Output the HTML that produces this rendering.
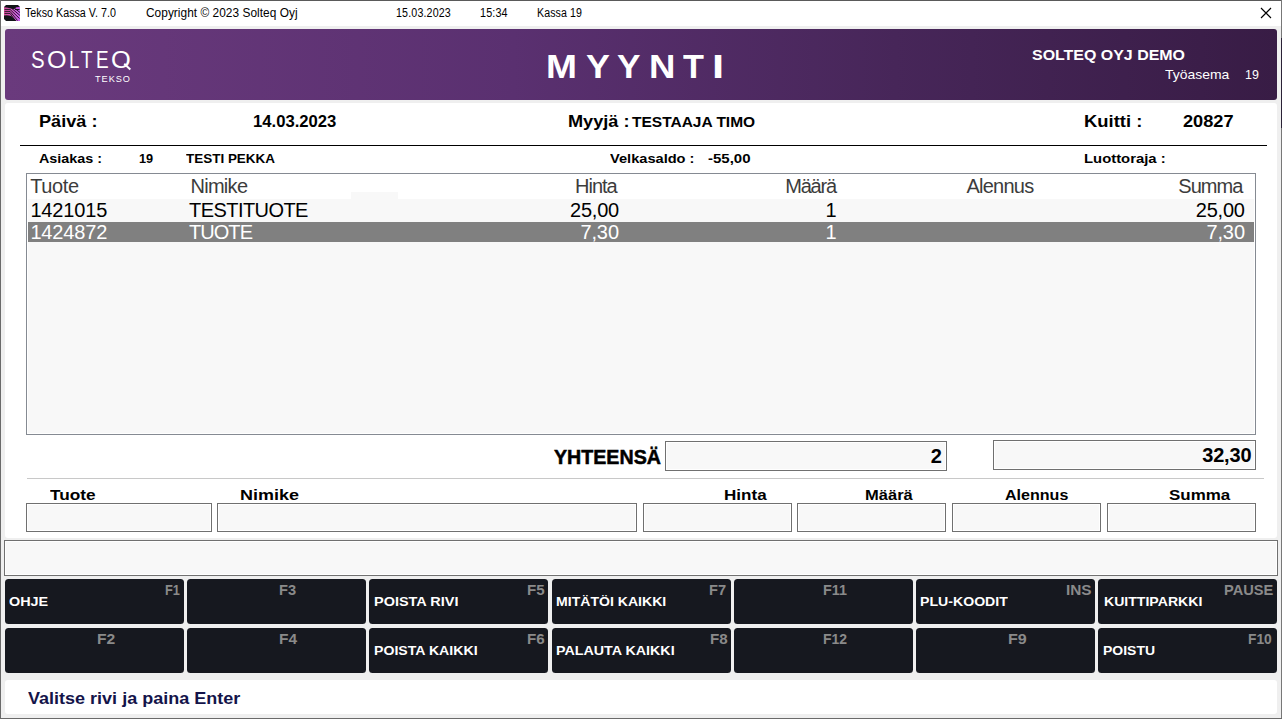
<!DOCTYPE html>
<html><head><meta charset="utf-8"><style>
html,body{margin:0;padding:0;width:1282px;height:719px;overflow:hidden;background:#efefef;}
body{position:relative;font-family:"Liberation Sans",sans-serif;}
.b{position:absolute;}
.t,.t2{position:absolute;white-space:nowrap;}
</style></head><body>
<div class="b" style="left:0px;top:0px;width:1282px;height:719px;background:#efefef;"></div>
<div class="b" style="left:0px;top:0px;width:1282px;height:26px;background:#ffffff;"></div>
<div class="b" style="left:0px;top:0px;width:1282px;height:1px;background:#5a5a5a;"></div>
<div class="b" style="left:0px;top:0px;width:1px;height:719px;background:#6a6a6a;"></div>
<div class="b" style="left:1281px;top:0px;width:1px;height:719px;background:#777;"></div>
<div class="b" style="left:1281px;top:38px;width:1px;height:90px;background:#2a2236;"></div>
<div class="b" style="left:0px;top:718px;width:1282px;height:1px;background:#6a6a6a;"></div>
<svg class="b" style="left:4px;top:5px" width="16" height="16" viewBox="0 0 16 16">
<defs><linearGradient id="pg" x1="0" y1="0" x2="1" y2="0"><stop offset="0" stop-color="#e0509e"/><stop offset="1" stop-color="#c85ff0"/></linearGradient></defs>
<path d="M2 0 H14 L16 2 V14 L14 16 H2 L0 14 V2 Z" fill="#121418"/>
<path d="M0 2.2 Q4 2.4 7 3.6 Q9 4.6 10.5 3.4 Q12.5 1.8 16 2 V16 H12.5 Q9 12.5 7 11 Q4 9.8 0 10.5 Z" fill="url(#pg)"/>
<path d="M0.5 4.4 H6 L15.5 13.5 M0.5 6.4 H6 L13.5 15.5 M0.5 8.4 H6 L11.5 16 M7.5 3.2 L16 10.5 M11 4.5 H15.5 M10 2.8 L16 7.5" stroke="#121418" stroke-width="0.9" fill="none"/>
</svg>
<div class="t" style="left:25.40px;top:7.42px;font-size:12.5px;line-height:12.5px;transform-origin:0 0;transform:scaleX(0.8585);color:#000;">Tekso Kassa V. 7.0</div>
<div class="t" style="left:146.00px;top:7.42px;font-size:12.5px;line-height:12.5px;transform-origin:0 0;transform:scaleX(0.9494);letter-spacing:0.038px;color:#000;">Copyright © 2023 Solteq Oyj</div>
<div class="t" style="left:396.40px;top:7.42px;font-size:12.5px;line-height:12.5px;transform-origin:0 0;transform:scaleX(0.8540);letter-spacing:0.178px;color:#000;">15.03.2023</div>
<div class="t" style="left:480.00px;top:7.42px;font-size:12.5px;line-height:12.5px;transform-origin:0 0;transform:scaleX(0.8647);letter-spacing:0.150px;color:#000;">15:34</div>
<div class="t" style="left:537.20px;top:7.42px;font-size:12.5px;line-height:12.5px;transform-origin:0 0;transform:scaleX(0.8510);letter-spacing:0.114px;color:#000;">Kassa 19</div>
<svg class="b" style="left:1258px;top:6px" width="16" height="16" viewBox="0 0 16 16"><path d="M3 2 L13 12 M13 2 L3 12" stroke="#000" stroke-width="1.15"/></svg>
<div class="b" style="left:5px;top:29px;width:1272px;height:71px;background:linear-gradient(90deg,#6a3a7d 0%,#5a3070 40%,#472659 70%,#381c45 100%);border-radius:3px;"></div>
<div class="t2" style="left:31.03px;top:48.96px;font-size:23.2px;line-height:23.2px;transform-origin:0 19.64px;transform:scale(0.8797,1.0000);color:#fff;">S</div>
<div class="t2" style="left:46.91px;top:48.96px;font-size:23.2px;line-height:23.2px;transform-origin:0 19.64px;transform:scale(1.0823,1.0000);color:#fff;">O</div>
<div class="t2" style="left:68.57px;top:48.96px;font-size:23.2px;line-height:23.2px;transform-origin:0 19.64px;transform:scale(0.8039,1.0000);color:#fff;">L</div>
<div class="t2" style="left:81.00px;top:48.96px;font-size:23.2px;line-height:23.2px;transform-origin:0 19.64px;transform:scale(0.8092,1.0000);color:#fff;">T</div>
<div class="t2" style="left:96.25px;top:48.96px;font-size:23.2px;line-height:23.2px;transform-origin:0 19.64px;transform:scale(0.8175,1.0000);color:#fff;">E</div>
<div class="t2" style="left:111.10px;top:48.96px;font-size:23.2px;line-height:23.2px;transform-origin:0 19.64px;transform:scale(1.0949,1.0000);color:#fff;">O</div>
<svg class="b" style="left:118px;top:58px" width="16" height="14"><path d="M7 6.5 L11.6 10.8" stroke="#fff" stroke-width="2" stroke-linecap="square"/></svg>
<div class="t" style="left:95.00px;top:75.21px;font-size:9.2px;line-height:9.2px;letter-spacing:0.950px;color:#fff;">TEKSO</div>
<div class="t2" style="left:546.46px;top:49.54px;font-size:33.5px;line-height:33.5px;transform-origin:0 28.36px;transform:scale(1.1106,1.0000);color:#fff;font-weight:bold;">M</div>
<div class="t2" style="left:585.66px;top:49.54px;font-size:33.5px;line-height:33.5px;transform-origin:0 28.36px;transform:scale(1.0708,1.0000);color:#fff;font-weight:bold;">Y</div>
<div class="t2" style="left:617.27px;top:49.54px;font-size:33.5px;line-height:33.5px;transform-origin:0 28.36px;transform:scale(1.0519,1.0000);color:#fff;font-weight:bold;">Y</div>
<div class="t2" style="left:648.80px;top:49.54px;font-size:33.5px;line-height:33.5px;transform-origin:0 28.36px;transform:scale(1.0914,1.0000);color:#fff;font-weight:bold;">N</div>
<div class="t2" style="left:683.49px;top:49.54px;font-size:33.5px;line-height:33.5px;transform-origin:0 28.36px;transform:scale(1.0203,1.0000);color:#fff;font-weight:bold;">T</div>
<div class="t2" style="left:712.23px;top:49.54px;font-size:33.5px;line-height:33.5px;transform-origin:0 28.36px;transform:scale(1.3061,1.0000);color:#fff;font-weight:bold;">I</div>
<div class="t" style="left:1032.00px;top:46.80px;font-size:15px;line-height:15px;font-weight:bold;transform-origin:0 0;transform:scaleX(1.0634);color:#fff;">SOLTEQ OYJ DEMO</div>
<div class="t" style="left:1165.00px;top:67.57px;font-size:13.5px;line-height:13.5px;transform-origin:0 0;transform:scaleX(1.0323);color:#fff;">Työasema</div>
<div class="t" style="left:1245.00px;top:67.57px;font-size:13.5px;line-height:13.5px;transform-origin:0 0;transform:scaleX(0.9231);color:#fff;">19</div>
<div class="b" style="left:5px;top:103px;width:1272px;height:435px;background:#fff;border-radius:3px;"></div>
<div class="t" style="left:39.40px;top:112.61px;font-size:17px;line-height:17px;font-weight:bold;transform-origin:0 0;transform:scaleX(1.0658);color:#000;">Päivä :</div>
<div class="t" style="left:253.40px;top:112.61px;font-size:17px;line-height:17px;font-weight:bold;transform-origin:0 0;transform:scaleX(0.9798);color:#000;">14.03.2023</div>
<div class="t" style="left:567.80px;top:112.61px;font-size:17px;line-height:17px;font-weight:bold;transform-origin:0 0;transform:scaleX(1.0675);color:#000;">Myyjä :</div>
<div class="t" style="left:632.00px;top:113.88px;font-size:15.5px;line-height:15.5px;font-weight:bold;color:#000;">TESTAAJA TIMO</div>
<div class="t" style="left:1083.60px;top:112.61px;font-size:17px;line-height:17px;font-weight:bold;transform-origin:0 0;transform:scaleX(1.0826);color:#000;">Kuitti :</div>
<div class="t" style="left:1182.60px;top:112.61px;font-size:17px;line-height:17px;font-weight:bold;transform-origin:0 0;transform:scaleX(1.0699);color:#000;">20827</div>
<div class="b" style="left:20px;top:145px;width:1247px;height:1px;background:#000;"></div>
<div class="t" style="left:39.40px;top:153.42px;font-size:12.5px;line-height:12.5px;font-weight:bold;transform-origin:0 0;transform:scaleX(1.1474);color:#000;">Asiakas :</div>
<div class="t" style="left:139.00px;top:153.42px;font-size:12.5px;line-height:12.5px;font-weight:bold;transform-origin:0 0;transform:scaleX(1.0199);color:#000;">19</div>
<div class="t" style="left:185.60px;top:153.42px;font-size:12.5px;line-height:12.5px;font-weight:bold;transform-origin:0 0;transform:scaleX(1.0770);color:#000;">TESTI PEKKA</div>
<div class="t" style="left:610.00px;top:153.42px;font-size:12.5px;line-height:12.5px;font-weight:bold;transform-origin:0 0;transform:scaleX(1.1690);color:#000;">Velkasaldo :</div>
<div class="t" style="left:708.00px;top:153.42px;font-size:12.5px;line-height:12.5px;font-weight:bold;transform-origin:0 0;transform:scaleX(1.2007);color:#000;">-55,00</div>
<div class="t" style="left:1083.60px;top:153.42px;font-size:12.5px;line-height:12.5px;font-weight:bold;transform-origin:0 0;transform:scaleX(1.1883);color:#000;">Luottoraja :</div>
<div class="b" style="left:26px;top:173px;width:1230px;height:262px;background:#fff;border:1px solid #858a92;box-sizing:border-box;"></div>
<div class="b" style="left:28px;top:199px;width:1226px;height:234px;background:#f8f8f8;"></div>
<div class="b" style="left:351px;top:192px;width:47px;height:7px;background:#f8f8f8;"></div>
<div class="b" style="left:28px;top:222px;width:1226px;height:20px;background:#808080;"></div>
<div class="t" style="left:30.20px;top:176.07px;font-size:20px;line-height:20px;letter-spacing:-0.350px;color:#3c3c3c;">Tuote</div>
<div class="t" style="left:190.40px;top:176.07px;font-size:20px;line-height:20px;letter-spacing:-0.700px;color:#3c3c3c;">Nimike</div>
<div class="t" style="left:575.00px;top:176.07px;font-size:20px;line-height:20px;letter-spacing:-1.000px;color:#3c3c3c;">Hinta</div>
<div class="t" style="left:785.20px;top:176.07px;font-size:20px;line-height:20px;letter-spacing:-1.200px;color:#3c3c3c;">Määrä</div>
<div class="t" style="left:966.40px;top:176.07px;font-size:20px;line-height:20px;letter-spacing:-0.750px;color:#3c3c3c;">Alennus</div>
<div class="t" style="left:1178.20px;top:176.07px;font-size:20px;line-height:20px;letter-spacing:-0.900px;color:#3c3c3c;">Summa</div>
<div class="t" style="left:30.40px;top:200.07px;font-size:20px;line-height:20px;letter-spacing:-0.150px;color:#000;">1421015</div>
<div class="t" style="left:189.00px;top:200.07px;font-size:20px;line-height:20px;letter-spacing:-0.556px;color:#000;">TESTITUOTE</div>
<div class="t" style="left:570.00px;top:200.07px;font-size:20px;line-height:20px;letter-spacing:-0.225px;color:#000;">25,00</div>
<div class="t" style="left:825.50px;top:200.07px;font-size:20px;line-height:20px;color:#000;">1</div>
<div class="t" style="left:1195.80px;top:200.07px;font-size:20px;line-height:20px;letter-spacing:-0.225px;color:#000;">25,00</div>
<div class="t" style="left:30.40px;top:222.07px;font-size:20px;line-height:20px;letter-spacing:-0.150px;color:#fff;">1424872</div>
<div class="t" style="left:189.00px;top:222.07px;font-size:20px;line-height:20px;letter-spacing:-0.950px;color:#fff;">TUOTE</div>
<div class="t" style="left:580.40px;top:222.07px;font-size:20px;line-height:20px;letter-spacing:-0.100px;color:#fff;">7,30</div>
<div class="t" style="left:825.50px;top:222.07px;font-size:20px;line-height:20px;color:#fff;">1</div>
<div class="t" style="left:1206.40px;top:222.07px;font-size:20px;line-height:20px;letter-spacing:-0.100px;color:#fff;">7,30</div>
<div class="t" style="left:554.00px;top:447.07px;font-size:20px;line-height:20px;font-weight:bold;transform-origin:0 0;transform:scaleX(0.9817);color:#000;-webkit-text-stroke:0.5px #000;">YHTEENSÄ</div>
<div class="b" style="left:665px;top:441px;width:282px;height:30px;background:#f8f8f8;border:1px solid #707070;box-shadow:inset 0 0 0 1px #fff;box-sizing:border-box;"></div>
<div class="t" style="left:930.70px;top:446.07px;font-size:20px;line-height:20px;font-weight:bold;color:#000;">2</div>
<div class="b" style="left:993px;top:440px;width:263px;height:30px;background:#f8f8f8;border:1px solid #707070;box-shadow:inset 0 0 0 1px #fff;box-sizing:border-box;"></div>
<div class="t" style="left:1202.20px;top:445.07px;font-size:20px;line-height:20px;font-weight:bold;letter-spacing:-0.175px;color:#000;">32,30</div>
<div class="b" style="left:27px;top:478px;width:1237px;height:1px;background:#c8c8c8;"></div>
<div class="t" style="left:49.60px;top:487.30px;font-size:15px;line-height:15px;font-weight:bold;transform-origin:0 0;transform:scaleX(1.1483);color:#000;">Tuote</div>
<div class="t" style="left:240.00px;top:487.30px;font-size:15px;line-height:15px;font-weight:bold;transform-origin:0 0;transform:scaleX(1.1984);color:#000;">Nimike</div>
<div class="t" style="left:723.60px;top:487.30px;font-size:15px;line-height:15px;font-weight:bold;transform-origin:0 0;transform:scaleX(1.1371);color:#000;">Hinta</div>
<div class="t" style="left:865.40px;top:487.30px;font-size:15px;line-height:15px;font-weight:bold;transform-origin:0 0;transform:scaleX(1.1029);color:#000;">Määrä</div>
<div class="t" style="left:1005.40px;top:487.30px;font-size:15px;line-height:15px;font-weight:bold;transform-origin:0 0;transform:scaleX(1.0708);color:#000;">Alennus</div>
<div class="t" style="left:1168.80px;top:487.30px;font-size:15px;line-height:15px;font-weight:bold;transform-origin:0 0;transform:scaleX(1.1299);color:#000;">Summa</div>
<div class="b" style="left:26px;top:503px;width:186px;height:29px;background:#f8f8f8;border:1px solid #707070;box-shadow:inset 0 0 0 1px #fff;box-sizing:border-box;"></div>
<div class="b" style="left:217px;top:503px;width:420px;height:29px;background:#f8f8f8;border:1px solid #707070;box-shadow:inset 0 0 0 1px #fff;box-sizing:border-box;"></div>
<div class="b" style="left:643px;top:503px;width:149px;height:29px;background:#f8f8f8;border:1px solid #707070;box-shadow:inset 0 0 0 1px #fff;box-sizing:border-box;"></div>
<div class="b" style="left:797px;top:503px;width:149px;height:29px;background:#f8f8f8;border:1px solid #707070;box-shadow:inset 0 0 0 1px #fff;box-sizing:border-box;"></div>
<div class="b" style="left:952px;top:503px;width:149px;height:29px;background:#f8f8f8;border:1px solid #707070;box-shadow:inset 0 0 0 1px #fff;box-sizing:border-box;"></div>
<div class="b" style="left:1107px;top:503px;width:149px;height:29px;background:#f8f8f8;border:1px solid #707070;box-shadow:inset 0 0 0 1px #fff;box-sizing:border-box;"></div>
<div class="b" style="left:4px;top:540px;width:1274px;height:36px;background:#f8f8f8;border:1px solid #707070;box-shadow:inset 0 0 0 1px #fff;box-sizing:border-box;"></div>
<div class="b" style="left:5px;top:579px;width:179px;height:45px;background:#16181f;border-radius:3.5px;"></div>
<div class="t" style="left:9.20px;top:594.50px;font-size:13px;line-height:13px;font-weight:bold;transform-origin:0 0;transform:scaleX(1.1068);color:#fff;">OHJE</div>
<div class="t" style="left:165.20px;top:583.15px;font-size:14px;line-height:14px;font-weight:bold;transform-origin:0 0;transform:scaleX(0.9126);color:#8a8a8a;">F1</div>
<div class="b" style="left:187px;top:579px;width:179px;height:45px;background:#16181f;border-radius:3.5px;"></div>
<div class="t" style="left:279.40px;top:583.15px;font-size:14px;line-height:14px;font-weight:bold;transform-origin:0 0;transform:scaleX(1.0452);color:#8a8a8a;">F3</div>
<div class="b" style="left:369px;top:579px;width:179px;height:45px;background:#16181f;border-radius:3.5px;"></div>
<div class="t" style="left:373.60px;top:594.50px;font-size:13px;line-height:13px;font-weight:bold;transform-origin:0 0;transform:scaleX(1.1137);color:#fff;">POISTA RIVI</div>
<div class="t" style="left:526.60px;top:583.15px;font-size:14px;line-height:14px;font-weight:bold;transform-origin:0 0;transform:scaleX(1.0832);color:#8a8a8a;">F5</div>
<div class="b" style="left:552px;top:579px;width:179px;height:45px;background:#16181f;border-radius:3.5px;"></div>
<div class="t" style="left:556.00px;top:594.50px;font-size:13px;line-height:13px;font-weight:bold;transform-origin:0 0;transform:scaleX(1.0824);color:#fff;">MITÄTÖI KAIKKI</div>
<div class="t" style="left:709.20px;top:583.15px;font-size:14px;line-height:14px;font-weight:bold;transform-origin:0 0;transform:scaleX(1.0452);color:#8a8a8a;">F7</div>
<div class="b" style="left:734px;top:579px;width:179px;height:45px;background:#16181f;border-radius:3.5px;"></div>
<div class="t" style="left:823.00px;top:583.15px;font-size:14px;line-height:14px;font-weight:bold;transform-origin:0 0;transform:scaleX(1.0253);color:#8a8a8a;">F11</div>
<div class="b" style="left:916px;top:579px;width:179px;height:45px;background:#16181f;border-radius:3.5px;"></div>
<div class="t" style="left:920.40px;top:594.50px;font-size:13px;line-height:13px;font-weight:bold;transform-origin:0 0;transform:scaleX(1.0863);color:#fff;">PLU-KOODIT</div>
<div class="t" style="left:1065.70px;top:583.15px;font-size:14px;line-height:14px;font-weight:bold;transform-origin:0 0;transform:scaleX(1.0963);color:#8a8a8a;">INS</div>
<div class="b" style="left:1098px;top:579px;width:179px;height:45px;background:#16181f;border-radius:3.5px;"></div>
<div class="t" style="left:1104.00px;top:594.50px;font-size:13px;line-height:13px;font-weight:bold;transform-origin:0 0;transform:scaleX(1.0833);color:#fff;">KUITTIPARKKI</div>
<div class="t" style="left:1223.80px;top:583.15px;font-size:14px;line-height:14px;font-weight:bold;transform-origin:0 0;transform:scaleX(1.0435);color:#8a8a8a;">PAUSE</div>
<div class="b" style="left:5px;top:628px;width:179px;height:45px;background:#16181f;border-radius:3.5px;"></div>
<div class="t" style="left:96.80px;top:632.15px;font-size:14px;line-height:14px;font-weight:bold;transform-origin:0 0;transform:scaleX(1.1176);color:#8a8a8a;">F2</div>
<div class="b" style="left:187px;top:628px;width:179px;height:45px;background:#16181f;border-radius:3.5px;"></div>
<div class="t" style="left:279.00px;top:632.15px;font-size:14px;line-height:14px;font-weight:bold;transform-origin:0 0;transform:scaleX(1.1064);color:#8a8a8a;">F4</div>
<div class="b" style="left:369px;top:628px;width:179px;height:45px;background:#16181f;border-radius:3.5px;"></div>
<div class="t" style="left:373.60px;top:643.50px;font-size:13px;line-height:13px;font-weight:bold;transform-origin:0 0;transform:scaleX(1.0862);color:#fff;">POISTA KAIKKI</div>
<div class="t" style="left:526.60px;top:632.15px;font-size:14px;line-height:14px;font-weight:bold;transform-origin:0 0;transform:scaleX(1.0832);color:#8a8a8a;">F6</div>
<div class="b" style="left:552px;top:628px;width:179px;height:45px;background:#16181f;border-radius:3.5px;"></div>
<div class="t" style="left:556.00px;top:643.50px;font-size:13px;line-height:13px;font-weight:bold;transform-origin:0 0;transform:scaleX(1.0973);color:#fff;">PALAUTA KAIKKI</div>
<div class="t" style="left:709.60px;top:632.15px;font-size:14px;line-height:14px;font-weight:bold;transform-origin:0 0;transform:scaleX(1.0832);color:#8a8a8a;">F8</div>
<div class="b" style="left:734px;top:628px;width:179px;height:45px;background:#16181f;border-radius:3.5px;"></div>
<div class="t" style="left:823.00px;top:632.15px;font-size:14px;line-height:14px;font-weight:bold;transform-origin:0 0;transform:scaleX(1.0000);color:#8a8a8a;">F12</div>
<div class="b" style="left:916px;top:628px;width:179px;height:45px;background:#16181f;border-radius:3.5px;"></div>
<div class="t" style="left:1007.80px;top:632.15px;font-size:14px;line-height:14px;font-weight:bold;transform-origin:0 0;transform:scaleX(1.1497);color:#8a8a8a;">F9</div>
<div class="b" style="left:1098px;top:628px;width:179px;height:45px;background:#16181f;border-radius:3.5px;"></div>
<div class="t" style="left:1102.60px;top:643.50px;font-size:13px;line-height:13px;font-weight:bold;transform-origin:0 0;transform:scaleX(1.0750);color:#fff;">POISTU</div>
<div class="t" style="left:1248.20px;top:632.15px;font-size:14px;line-height:14px;font-weight:bold;transform-origin:0 0;transform:scaleX(0.9849);color:#8a8a8a;">F10</div>
<div class="b" style="left:5px;top:680px;width:1272px;height:34px;background:#fff;border-radius:3px;"></div>
<div class="t" style="left:27.80px;top:690.36px;font-size:17.3px;line-height:17.3px;font-weight:bold;transform-origin:0 0;transform:scaleX(1.0424);color:#14144a;">Valitse rivi ja paina Enter</div>
</body></html>
